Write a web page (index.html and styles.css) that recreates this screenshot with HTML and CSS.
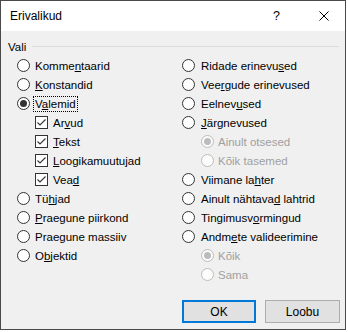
FILE: index.html
```html
<!DOCTYPE html>
<html lang="et">
<head>
    <meta charset="UTF-8">
    <title>Erivalikud</title>
    <link rel="stylesheet" href="styles.css">
</head>
<body>
    <div class="dialog">
        <div class="titlebar">
            <span class="title">Erivalikud</span>
            <span class="help">?</span>
            <svg class="close" width="10" height="10" viewBox="0 0 10 10">
                <path d="M0.5 0.5 L9.5 9.5 M9.5 0.5 L0.5 9.5" stroke="#000" stroke-width="1"/>
            </svg>
        </div>
        <div class="content">
            <div class="group-header">
                <span>Vali</span>
                <div class="line"></div>
            </div>
            <div class="columns">
                <div class="column">
                    <div class="row"><span class="radio"></span><span>Komme<u>n</u>taarid</span></div>
                    <div class="row"><span class="radio"></span><span><u>K</u>onstandid</span></div>
                    <div class="row"><span class="radio checked"></span><span class="focus">V<u>a</u>lemid</span></div>
                    <div class="row sub"><span class="check"><svg width="11" height="11" viewBox="0 0 11 11"><path d="M1.5 5.5 L4 8 L9.5 2.5" fill="none" stroke="#333" stroke-width="1.1"/></svg></span><span>Ar<u>v</u>ud</span></div>
                    <div class="row sub"><span class="check"><svg width="11" height="11" viewBox="0 0 11 11"><path d="M1.5 5.5 L4 8 L9.5 2.5" fill="none" stroke="#333" stroke-width="1.1"/></svg></span><span><u>T</u>ekst</span></div>
                    <div class="row sub"><span class="check"><svg width="11" height="11" viewBox="0 0 11 11"><path d="M1.5 5.5 L4 8 L9.5 2.5" fill="none" stroke="#333" stroke-width="1.1"/></svg></span><span><u>L</u>oogikamuutujad</span></div>
                    <div class="row sub"><span class="check"><svg width="11" height="11" viewBox="0 0 11 11"><path d="M1.5 5.5 L4 8 L9.5 2.5" fill="none" stroke="#333" stroke-width="1.1"/></svg></span><span>Vea<u>d</u></span></div>
                    <div class="row"><span class="radio"></span><span>Tü<u>h</u>jad</span></div>
                    <div class="row"><span class="radio"></span><span><u>P</u>raegune piirkond</span></div>
                    <div class="row"><span class="radio"></span><span>Prae<u>g</u>une massiiv</span></div>
                    <div class="row"><span class="radio"></span><span>O<u>b</u>jektid</span></div>
                </div>
                <div class="column">
                    <div class="row"><span class="radio"></span><span>Ridade erinevu<u>s</u>ed</span></div>
                    <div class="row"><span class="radio"></span><span>Vee<u>r</u>gude erinevused</span></div>
                    <div class="row"><span class="radio"></span><span>Eelnev<u>u</u>sed</span></div>
                    <div class="row"><span class="radio"></span><span><u>J</u>ärgnevused</span></div>
                    <div class="row sub disabled"><span class="radio checked"></span><span>Ainult otsesed</span></div>
                    <div class="row sub disabled"><span class="radio"></span><span>Kõik tasemed</span></div>
                    <div class="row"><span class="radio"></span><span>Viimane la<u>h</u>ter</span></div>
                    <div class="row"><span class="radio"></span><span>Ainult nähtava<u>d</u> lahtrid</span></div>
                    <div class="row"><span class="radio"></span><span>Tingimusv<u>o</u>rmingud</span></div>
                    <div class="row"><span class="radio"></span><span>Andm<u>e</u>te valideerimine</span></div>
                    <div class="row sub disabled"><span class="radio checked"></span><span>Kõik</span></div>
                    <div class="row sub disabled"><span class="radio"></span><span>Sama</span></div>
                </div>
            </div>
            <div class="buttons">
                <button class="default">OK</button>
                <button>Loobu</button>
            </div>
        </div>
    </div>
</body>
</html>
```

FILE: styles.css
```css
* {
    margin: 0;
    padding: 0;
    box-sizing: border-box;
}

body {
    font-family: 'Liberation Sans', Arial, sans-serif;
    font-size: 11.5px;
    color: #000;
    background: #ffffff;
}

.dialog {
    width: 346px;
    height: 330px;
    border: 1px solid #4a4a4a;
    background: #f0f0f0;
    display: flex;
    flex-direction: column;
}

.titlebar {
    height: 30px;
    background: #ffffff;
    display: flex;
    align-items: center;
    padding-left: 9px;
    font-size: 12px;
}

.title {
    flex: 1;
}

.help {
    margin-right: 39px;
    font-size: 12.5px;
}

.close {
    margin-right: 16px;
}

.content {
    flex: 1;
    padding: 6px 5px 0 0;
}

.group-header {
    display: flex;
    align-items: center;
    height: 19px;
    padding-left: 7px;
}

.group-header .line {
    flex: 1;
    height: 1px;
    background: #dcdcdc;
    margin-left: 6px;
    margin-right: 1px;
}

.columns {
    display: grid;
    grid-template-columns: 165px 1fr;
    padding-left: 16px;
}

.row {
    display: flex;
    align-items: center;
    height: 19px;
    gap: 5px;
    white-space: nowrap;
}

.row.sub {
    padding-left: 18px;
}

.column + .column .row.sub {
    padding-left: 19px;
    gap: 4px;
}

.column + .column .row {
    gap: 6px;
}

u {
    text-decoration: underline;
    text-underline-offset: 1px;
}

.radio {
    width: 13px;
    height: 13px;
    border: 1px solid #333333;
    border-radius: 50%;
    background: #ffffff;
    display: flex;
    align-items: center;
    justify-content: center;
    flex-shrink: 0;
}

.radio.checked::after {
    content: '';
    width: 7px;
    height: 7px;
    border-radius: 50%;
    background: #333333;
}

.check {
    width: 13px;
    height: 13px;
    border: 1px solid #333333;
    background: #ffffff;
    display: flex;
    align-items: center;
    justify-content: center;
    flex-shrink: 0;
}

.focus {
    outline: 1px dotted #000000;
    padding: 0 1px;
    margin-left: -1px;
    line-height: 14px;
}

.disabled {
    color: #a0a0a0;
}

.disabled .radio {
    border-color: #bcbcbc;
    background: #fcfcfc;
}

.disabled .radio.checked::after {
    background: #bcbcbc;
}

.buttons {
    display: flex;
    justify-content: flex-end;
    gap: 9px;
    margin-top: 16px;
}

button {
    width: 75px;
    height: 23px;
    font-family: inherit;
    font-size: 12px;
    background: #e1e1e1;
    border: 1px solid #adadad;
    color: #000;
}

button.default {
    width: 74px;
    border: 2px solid #0078d7;
}
```
